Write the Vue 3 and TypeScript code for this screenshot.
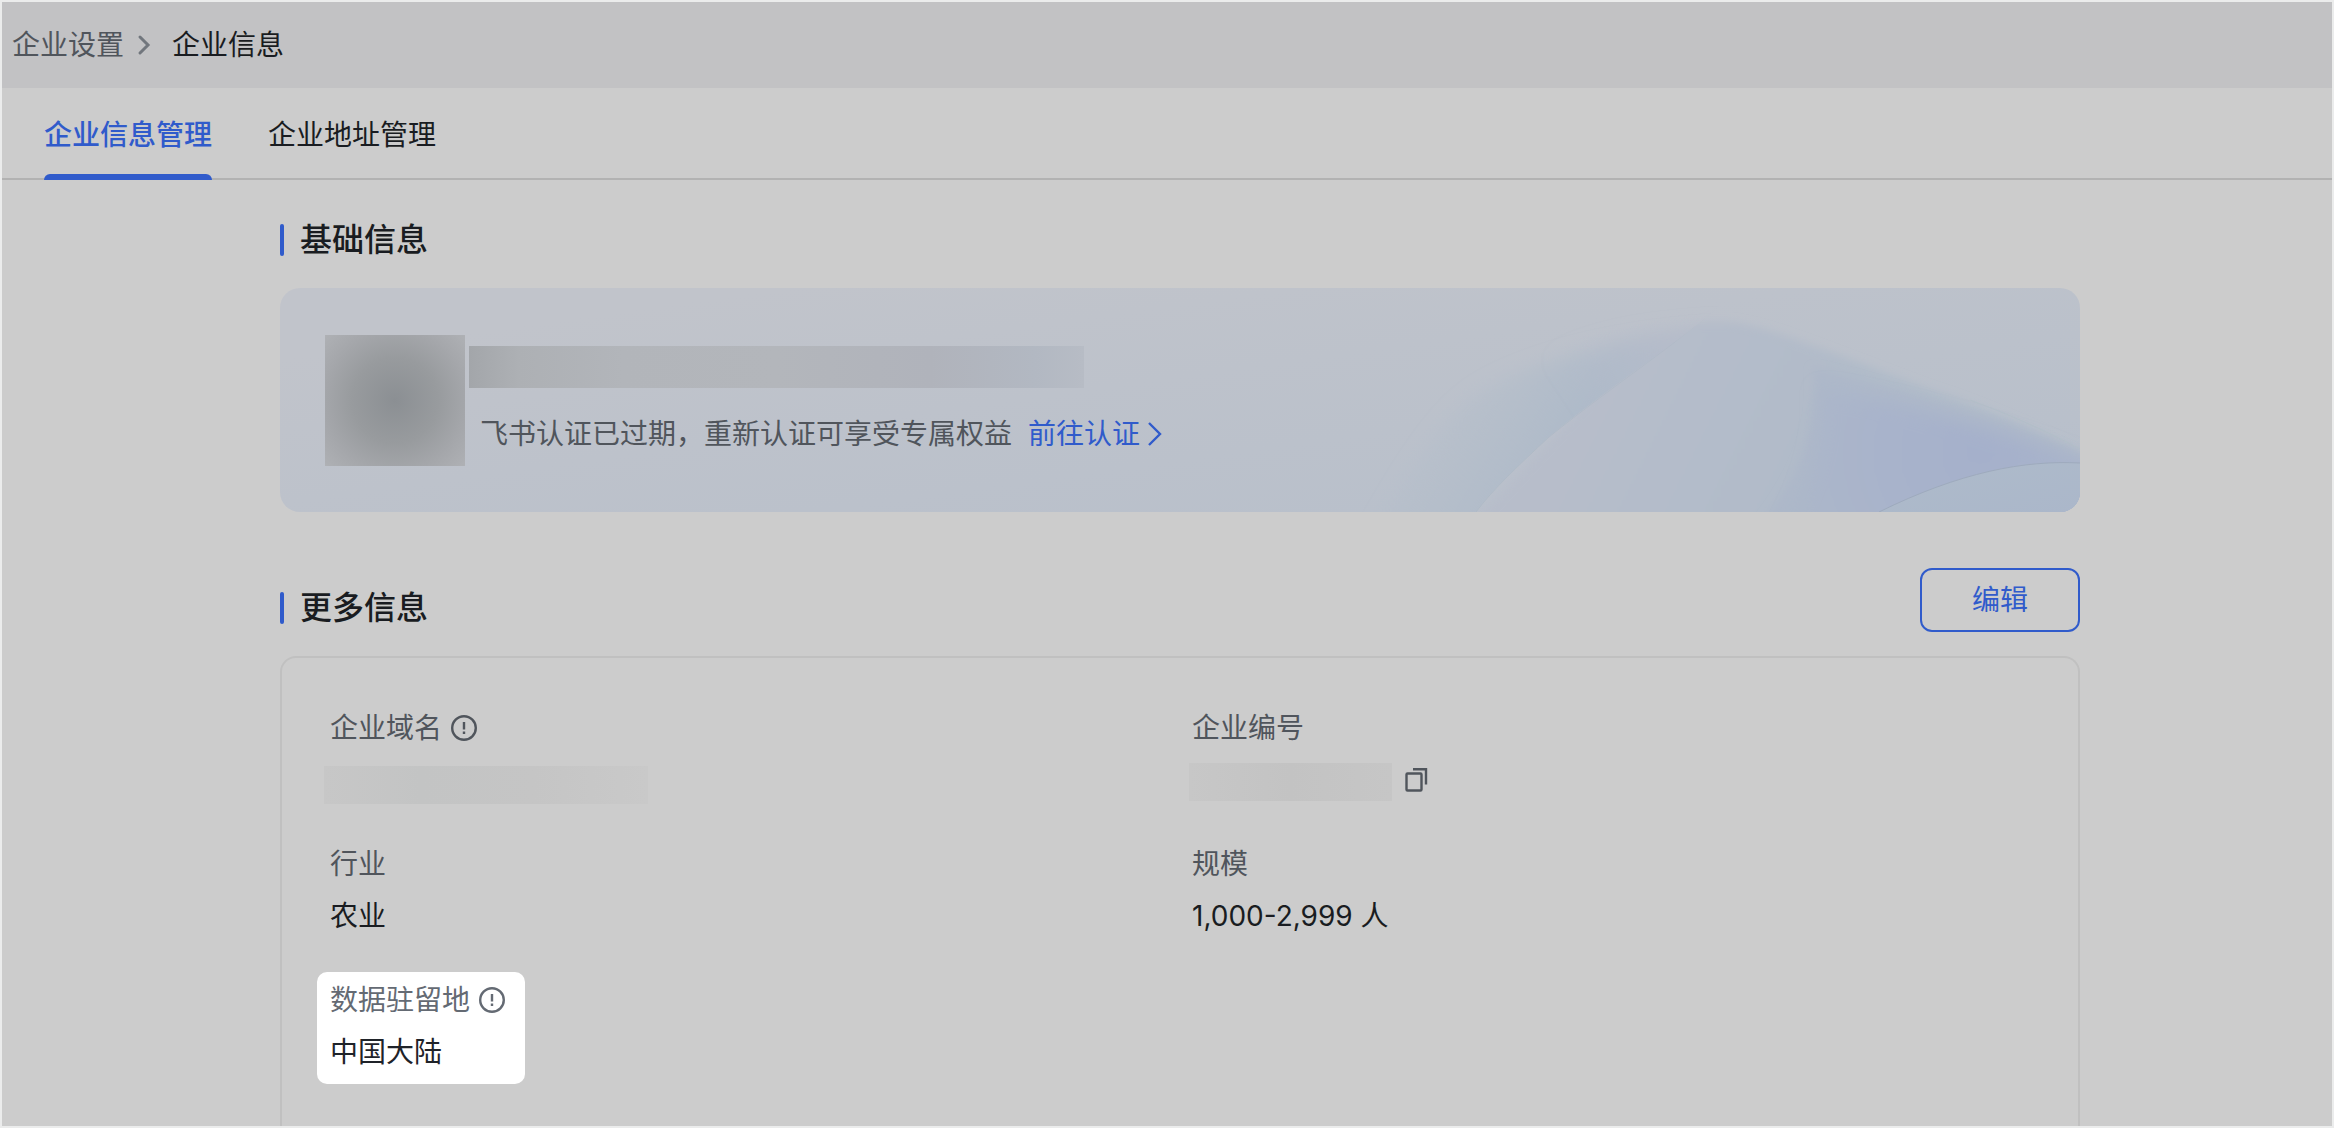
<script setup lang="ts">
import { ref } from 'vue'

interface Tab {
  id: string
  label: string
}

interface Field {
  id: string
  label: string
  value?: string
  masked?: 'domain' | 'code'
  tip?: boolean
  copyable?: boolean
  spotlight?: boolean
}

const tabs: Tab[] = [
  { id: 'info', label: '企业信息管理' },
  { id: 'address', label: '企业地址管理' },
]
const activeTab = ref('info')

const fields: Field[] = [
  { id: 'domain', label: '企业域名', masked: 'domain', tip: true },
  { id: 'code', label: '企业编号', masked: 'code', copyable: true },
  { id: 'industry', label: '行业', value: '农业' },
  { id: 'scale', label: '规模', value: '1,000-2,999 人' },
  { id: 'residency', label: '数据驻留地', value: '中国大陆', tip: true, spotlight: true },
]
</script>

<template>
  <div class="page">
    <nav class="crumbs" aria-label="breadcrumb">
      <a class="crumb" href="#settings">企业设置</a>
      <svg class="crumb-arrow" viewBox="0 0 16 24" aria-hidden="true">
        <path d="M4 4 12 12 4 20" />
      </svg>
      <span class="crumb current">企业信息</span>
    </nav>

    <div class="tabs" role="tablist">
      <button
        v-for="tab in tabs"
        :key="tab.id"
        type="button"
        role="tab"
        class="tab"
        :class="{ active: tab.id === activeTab }"
        :aria-selected="tab.id === activeTab"
        @click="activeTab = tab.id"
      >
        {{ tab.label }}
      </button>
    </div>

    <main class="content">
      <header class="section-head">
        <h2 class="section-title">基础信息</h2>
      </header>

      <section class="banner">
        <svg class="banner-art" viewBox="1000 0 800 224" preserveAspectRatio="xMaxYMid slice" aria-hidden="true">
          <defs>
            <filter id="soft" x="-20%" y="-20%" width="140%" height="140%"><feGaussianBlur stdDeviation="9" /></filter>
            <filter id="fine" x="-20%" y="-20%" width="140%" height="140%"><feGaussianBlur stdDeviation="4" /></filter>
            <linearGradient id="petal" gradientUnits="userSpaceOnUse" x1="1120" y1="90" x2="1275" y2="180">
              <stop offset="0" stop-color="#b5bfca" stop-opacity="0" />
              <stop offset="1" stop-color="#aebac9" />
            </linearGradient>
            <linearGradient id="petal-top" gradientUnits="userSpaceOnUse" x1="1300" y1="120" x2="1420" y2="40">
              <stop offset="0" stop-color="#b6bcca" stop-opacity="0" />
              <stop offset="1" stop-color="#b7bcca" />
            </linearGradient>
            <linearGradient id="sheet" gradientUnits="userSpaceOnUse" x1="1320" y1="80" x2="1540" y2="190">
              <stop offset="0" stop-color="#b7bdca" />
              <stop offset="1" stop-color="#b0bbc9" />
            </linearGradient>
            <radialGradient id="deep" gradientUnits="userSpaceOnUse" cx="1700" cy="165" r="190">
              <stop offset="0" stop-color="#a5b0cb" />
              <stop offset="0.500" stop-color="#a8b3cb" />
              <stop offset="1" stop-color="#acb7c9" />
            </radialGradient>
            <linearGradient id="hill" x1="0" y1="0" x2="1" y2="1">
              <stop offset="0" stop-color="#aebbca" />
              <stop offset="1" stop-color="#abb7ca" />
            </linearGradient>
            <linearGradient id="fold" gradientUnits="userSpaceOnUse" x1="1196" y1="224" x2="1444" y2="14">
              <stop offset="0" stop-color="#afbac6" />
              <stop offset="0.800" stop-color="#b1bac7" />
              <stop offset="1" stop-color="#bcc1ca" stop-opacity="0" />
            </linearGradient>
            <clipPath id="left-side">
              <path d="M1000 0H1460C1410 48 1335 94 1269 149 1238 178 1214 200 1196 224H1000Z" />
            </clipPath>
            <clipPath id="right-side">
              <path d="M1460 0C1410 48 1335 94 1269 149 1238 178 1214 200 1196 224H1800V0Z" />
            </clipPath>
          </defs>
          <g clip-path="url(#left-side)">
            <path filter="url(#soft)" fill="url(#petal)" d="M1480 44C1370 46 1260 68 1200 104 1160 130 1130 180 1090 250H1240L1480 56Z" />
            <path filter="url(#soft)" fill="url(#petal-top)" d="M1480 38C1370 40 1300 50 1230 90L1300 140 1480 50Z" />
          </g>
          <g clip-path="url(#right-side)">
            <path filter="url(#fine)" fill="url(#sheet)" d="M1380 34H1450C1490 39 1533 58 1646 100 1700 117 1750 139 1810 168V250H1180Z" />
            <path filter="url(#fine)" fill="#adb8c9" d="M1533 80C1580 90 1646 110 1690 124 1740 140 1780 158 1820 176V250H1470C1510 200 1540 150 1533 80Z" />
            <path filter="url(#soft)" fill="url(#deep)" d="M1540 102C1590 108 1646 124 1690 136 1740 150 1780 164 1820 180V250H1500C1530 200 1544 150 1540 102Z" />
          </g>
          <path fill="none" stroke="#b2bec8" d="M1690 112C1730 127 1760 140 1800 161" />
          <path fill="none" stroke="url(#fold)" d="M1444 14C1400 54 1335 96 1269 149 1238 178 1214 200 1196 224" />
          <path fill="url(#hill)" d="M1599 224C1680 184 1745 172 1800 175V224Z" />
          <path fill="none" stroke="#9eaabd" d="M1599 224C1680 184 1745 172 1800 175" />
        </svg>

        <div class="banner-body">
          <div class="logo-mask"></div>
          <div class="banner-text">
            <div class="name-mask"></div>
            <p class="notice">
              <span>飞书认证已过期，重新认证可享受专属权益</span>
              <a class="verify" href="#verify">
                前往认证
                <svg class="verify-arrow" viewBox="0 0 16 28" aria-hidden="true">
                  <path d="M1 3 12 14 1 25" />
                </svg>
              </a>
            </p>
          </div>
        </div>
      </section>

      <header class="section-head more">
        <h2 class="section-title">更多信息</h2>
        <button type="button" class="edit">编辑</button>
      </header>

      <dl class="card">
        <div v-for="field in fields" :key="field.id" class="field" :class="{ spotlight: field.spotlight }">
          <dt class="label">
            {{ field.label }}
            <svg v-if="field.tip" class="tip" viewBox="0 0 28 28" aria-hidden="true">
              <circle cx="14" cy="14" r="11.800" />
              <path d="M14 8v7.500M14 17.500v2.500" />
            </svg>
          </dt>
          <dd class="value">
            <span v-if="field.masked" class="mask" :class="field.masked"></span>
            <template v-else>{{ field.value }}</template>
            <button v-if="field.copyable" type="button" class="copy" aria-label="复制企业编号">
              <svg viewBox="0 0 24 26" aria-hidden="true">
                <rect x="2.500" y="6.500" width="15" height="17" rx="1" />
                <path d="M9 2.200H22V17.500" />
              </svg>
            </button>
          </dd>
        </div>
      </dl>
    </main>
  </div>
</template>

<style>
body {
  margin: 0;
  background: #cccccc;
}
</style>

<style scoped>
.page {
  --ink: #191c21;
  --muted: #50555c;
  --blue: #305bcb;
  box-sizing: border-box;
  height: 100vh;
  display: flex;
  flex-direction: column;
  overflow: hidden;
  border: 2px solid #ebecec;
  background: #cccccc;
  color: var(--ink);
  font-family: Inter, "Noto Sans CJK SC", sans-serif;
  font-size: 28px;
  line-height: 44px;
}

button {
  padding: 0;
  border: 0;
  background: none;
  color: inherit;
  font: inherit;
  cursor: pointer;
}

a {
  color: inherit;
  text-decoration: none;
}

.crumbs {
  flex: none;
  display: flex;
  align-items: center;
  height: 86px;
  padding-left: 10px;
  background: #c2c2c4;
}

.crumb {
  color: var(--muted);
}

.crumb.current {
  color: var(--ink);
}

.crumb-arrow {
  width: 16px;
  height: 24px;
  margin: 0 20px 0 12px;
  fill: none;
  stroke: #71767d;
  stroke-width: 3;
  stroke-linecap: round;
}

.tabs {
  flex: none;
  display: flex;
  gap: 56px;
  height: 90px;
  padding-left: 42px;
  border-bottom: 2px solid #b2b2b2;
}

.tab {
  display: flex;
  flex-direction: column;
  justify-content: space-between;
  box-sizing: border-box;
  height: 92px;
  padding-top: 25px;
}

.tab.active {
  color: var(--blue);
  font-weight: 500;
}

.tab.active::after {
  content: "";
  width: 100%;
  height: 6px;
  border-radius: 6px 6px 0 0;
  background: var(--blue);
}

.content {
  flex: 1;
  min-height: 0;
  display: flex;
  flex-direction: column;
  padding: 44px 252px 0 278px;
}

.section-head {
  flex: none;
  display: flex;
  align-items: flex-end;
  justify-content: space-between;
  margin-bottom: 24px;
}

.section-head.more {
  margin-top: 56px;
}

.section-title {
  margin: 0 0 8px;
  display: flex;
  align-items: center;
  gap: 16px;
  font-size: 32px;
  line-height: 32px;
  font-weight: 500;
}

.section-title::before {
  content: "";
  width: 4px;
  height: 32px;
  border-radius: 2px;
  background: var(--blue);
}

.banner {
  flex: none;
  position: relative;
  height: 224px;
  overflow: hidden;
  border-radius: 20px;
  background: linear-gradient(172deg, #c1c4cb 15%, #bdc2cb 45%, #b9c0cb 80%, #b6beca);
}

.banner-art {
  position: absolute;
  top: 0;
  right: 0;
  width: 800px;
  height: 224px;
}

.banner-body {
  position: relative;
  display: flex;
  gap: 4px;
  padding: 47px 0 0 45px;
}

.logo-mask {
  width: 140px;
  height: 131px;
  background: radial-gradient(circle at 50% 50%, #8b8f93, #989b9e 45%, #a5a7ab 75%, #afb1b5);
}

.name-mask {
  width: 615px;
  height: 42px;
  margin-top: 11px;
  background: linear-gradient(90deg, #a3a6aa, #adb0b4 8%, #b2b5ba 25%, #b3b6bb 50%, #b0b3bb 75%, #b2b8c2 92%, #b7bcc5);
}

.notice {
  display: flex;
  gap: 16px;
  margin: 24px 0 0 11px;
  color: var(--muted);
}

.verify {
  display: flex;
  align-items: center;
  gap: 8px;
  color: var(--blue);
}

.verify-arrow {
  width: 16px;
  height: 28px;
  fill: none;
  stroke: currentColor;
  stroke-width: 2.4;
}

.edit {
  box-sizing: border-box;
  width: 160px;
  height: 64px;
  border: 2px solid var(--blue);
  border-radius: 12px;
  color: var(--blue);
}

.card {
  flex: 1;
  display: grid;
  grid-template-columns: 1fr 1fr;
  align-content: start;
  gap: 40px 24px;
  margin: 0;
  padding: 48px;
  border: 2px solid #c0c0c0;
  border-bottom: 0;
  border-radius: 16px 16px 0 0;
}

.field {
  display: flex;
  flex-direction: column;
  gap: 8px;
}

.label,
.value {
  display: flex;
  align-items: center;
  height: 44px;
  margin: 0;
}

.label {
  gap: 8px;
  color: var(--muted);
}

.tip {
  width: 28px;
  height: 28px;
  fill: none;
  stroke: currentColor;
  stroke-width: 2.4;
}

.mask {
  height: 38px;
}

.mask.domain {
  width: 324px;
  margin: 10px 0 0 -6px;
  background: linear-gradient(90deg, #c7c7c7, #c3c4c4 30%, #c5c5c5 65%, #c9c9c9);
}

.mask.code {
  width: 203px;
  margin: 4px 0 0 -3px;
  background: linear-gradient(90deg, #c7c7c7, #c3c3c3 50%, #c6c6c6);
}

.copy {
  width: 24px;
  height: 26px;
  margin-left: 12px;
  color: var(--muted);
}

.copy svg {
  display: block;
  fill: none;
  stroke: currentColor;
  stroke-width: 2.4;
}

.spotlight {
  justify-self: start;
  margin: -6px 0 0 -13px;
  padding: 6px 19px 10px 13px;
  border-radius: 10px;
  background: #ffffff;
  color: #1f2329;
}

.spotlight .label {
  color: #646a73;
}
</style>
